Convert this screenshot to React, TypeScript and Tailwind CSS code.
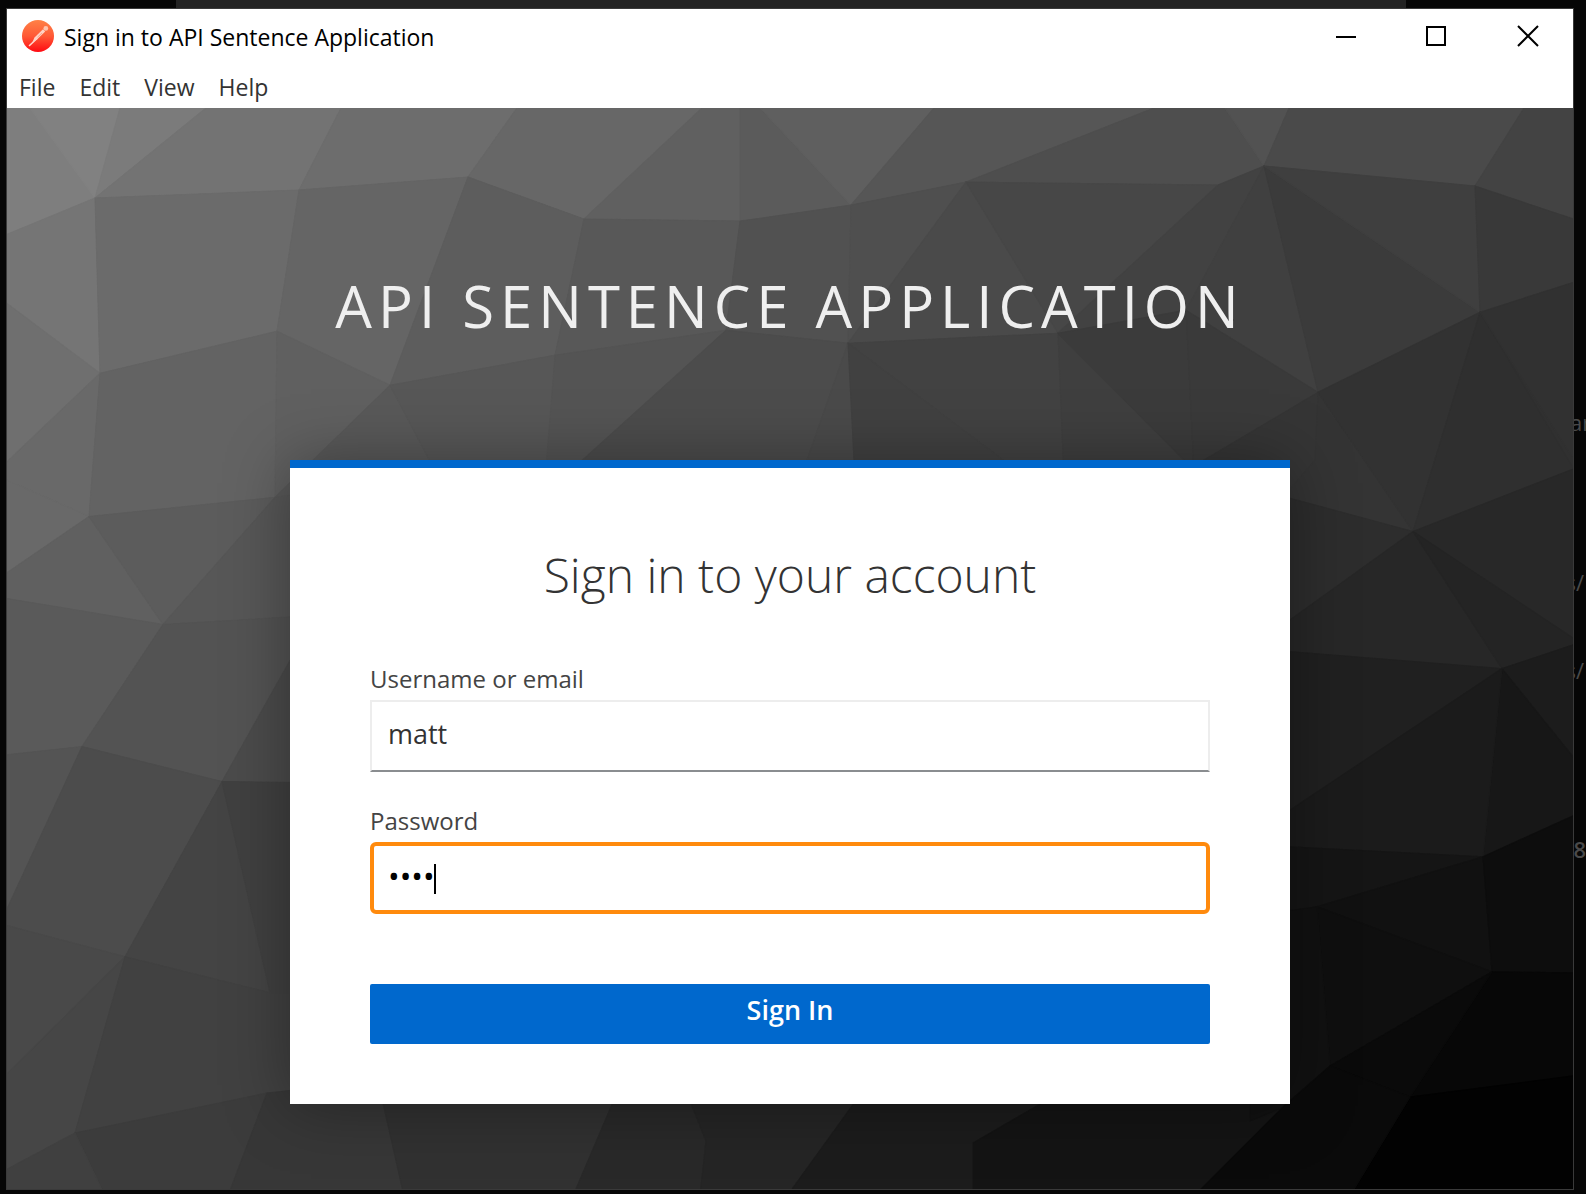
import React from "react";

/** Facets of the low-poly backdrop: grey level followed by the corner points. */
const facets: [number, string][] = [
  [0x7e, "0,100 120,108 95,198 6,235 0,235"],
  [0x81, "30,108 120,108 95,198"],
  [0x7b, "120,108 206,108 95,198"],
  [0x73, "206,108 341,108 299,190 95,198"],
  [0x6d, "341,108 517,108 468,177 299,190"],
  [0x67, "517,108 702,108 584,219 468,177"],
  [0x60, "702,108 740,108 740,221 584,219"],
  [0x5b, "740,108 760,108 851,205 740,221"],
  [0x5f, "760,108 934,108 851,205"],
  [0x56, "934,108 1154,108 966,182 851,205"],
  [0x4e, "1154,108 1225,108 1264,166 1218,185 966,182"],
  [0x52, "1225,108 1289,108 1264,166"],
  [0x4a, "1289,108 1524,108 1475,186 1264,166"],
  [0x43, "1524,108 1580,108 1580,221 1475,186"],
  [0x75, "0,237 95,198 100,373 0,298"],
  [0x6f, "0,298 100,373 0,468"],
  [0x6b, "95,198 299,190 277,331 100,373"],
  [0x65, "299,190 468,177 390,385 277,331"],
  [0x5d, "468,177 584,219 555,355 390,385"],
  [0x58, "584,219 740,221 726,330 555,355"],
  [0x51, "740,221 851,205 848,343 726,330"],
  [0x4f, "851,205 966,182 848,343"],
  [0x4a, "966,182 1058,333 848,343"],
  [0x47, "966,182 1218,185 1058,333"],
  [0x42, "1218,185 1264,166 1186,310 1058,333"],
  [0x40, "1264,166 1318,392 1186,310"],
  [0x3b, "1264,166 1480,312 1318,392"],
  [0x3f, "1264,166 1475,186 1480,312"],
  [0x39, "1475,186 1580,221 1580,280 1480,312"],
  [0x69, "0,468 100,373 89,516 0,477"],
  [0x63, "100,373 277,331 275,497 89,516"],
  [0x60, "277,331 390,385 275,497"],
  [0x59, "390,385 440,480 275,497"],
  [0x57, "390,385 555,355 550,480 440,480"],
  [0x54, "555,355 726,330 565,480 545,480"],
  [0x4c, "726,330 848,343 800,480 560,480"],
  [0x4a, "848,343 855,480 800,480"],
  [0x42, "848,343 1058,333 1064,480 1030,480"],
  [0x41, "848,343 1030,480 855,480"],
  [0x3f, "1058,333 1200,470 1200,490 1064,480"],
  [0x3b, "1058,333 1186,310 1194,470"],
  [0x3a, "1186,310 1318,392 1194,470"],
  [0x35, "1318,392 1317,500 1190,490 1190,468"],
  [0x34, "1318,392 1413,531 1280,500 1315,460"],
  [0x32, "1318,392 1480,312 1413,531"],
  [0x2f, "1480,312 1574,469 1413,531"],
  [0x31, "1480,312 1580,280 1580,469"],
  [0x69, "0,477 89,516 0,577"],
  [0x60, "89,516 163,624 0,597 0,577"],
  [0x5c, "89,516 275,497 163,624"],
  [0x57, "275,497 400,480 400,610 163,624"],
  [0x5a, "163,624 82,746 0,755 0,597"],
  [0x53, "163,624 400,610 290,660 222,781 82,746"],
  [0x4b, "222,781 290,660 400,660 400,783"],
  [0x54, "82,746 0,935 0,755"],
  [0x4c, "82,746 222,781 125,956 0,923"],
  [0x49, "0,923 125,956 0,1080"],
  [0x46, "125,956 75,1132 0,1172 0,1080"],
  [0x44, "222,781 270,992 125,956"],
  [0x40, "222,781 400,783 400,992 270,992"],
  [0x41, "125,956 270,992 400,992 400,1080 75,1132"],
  [0x3c, "75,1132 267,1092 228,1195 105,1195"],
  [0x40, "0,1172 75,1132 105,1195 0,1195"],
  [0x37, "267,1092 378,1080 404,1195 228,1195"],
  [0x31, "378,1080 622,1080 573,1195 404,1195"],
  [0x29, "622,1080 682,1080 706,1140 700,1195 573,1195"],
  [0x25, "682,1080 870,1080 787,1195 700,1195 706,1140"],
  [0x1c, "870,1080 1080,1080 973,1142 973,1195 787,1195"],
  [0x14, "1080,1080 1310,1080 1194,1195 973,1195 973,1142"],
  [0x2d, "1250,487 1413,531 1250,650"],
  [0x27, "1413,531 1502,668 1250,648"],
  [0x28, "1413,531 1580,466 1580,645"],
  [0x24, "1413,531 1580,642 1502,668"],
  [0x1c, "1502,668 1580,642 1580,765"],
  [0x17, "1502,668 1580,765 1580,812 1483,856"],
  [0x20, "1250,648 1502,668 1250,840"],
  [0x1b, "1250,836 1502,668 1483,856 1250,844"],
  [0x15, "1250,844 1483,856 1317,906 1250,920"],
  [0x11, "1317,906 1483,856 1492,971"],
  [0x0d, "1483,856 1580,812 1580,972 1492,971"],
  [0x0f, "1317,906 1492,971 1330,1065"],
  [0x11, "1250,915 1317,906 1330,1065 1282,1107 1250,1120"],
  [0x07, "1492,971 1580,972 1580,1075 1410,1096"],
  [0x0a, "1492,971 1410,1096 1330,1065"],
  [0x02, "1410,1096 1580,1074 1580,1195 1350,1195"],
  [0x0a, "1330,1065 1410,1096 1350,1195 1194,1195 1282,1107"],
];

function Backdrop() {
  return (
    <svg
      className="absolute inset-0 h-full w-full"
      viewBox="7 108 1566 1080"
      preserveAspectRatio="none"
      aria-hidden="true"
    >
      <rect x="0" y="100" width="1600" height="1100" fill="#303030" />
      {facets.map(([level, points]) => {
        const fill = `rgb(${level},${level},${level})`;
        return <polygon key={points} points={points} fill={fill} stroke={fill} strokeWidth="1" />;
      })}
    </svg>
  );
}

function AppLogo() {
  return (
    <svg width="32" height="32" viewBox="0 0 32 32" aria-hidden="true">
      <defs>
        <linearGradient id="logo-fill" x1="0" y1="0" x2="0" y2="1">
          <stop offset="0" stopColor="#ff8146" />
          <stop offset="0.5" stopColor="#ff5a36" />
          <stop offset="1" stopColor="#ff0a12" />
        </linearGradient>
      </defs>
      <circle cx="16" cy="16" r="16" fill="url(#logo-fill)" />
      <path d="M7.5 25.5 L15 18.5" stroke="#ffd9cf" strokeWidth="1.6" strokeLinecap="round" />
      <path d="M12.5 17.5 L21 9.3 L23.2 11.5 L15 19.6 L10.5 22 Z" fill="#ffd2c4" />
      <path d="M15.5 17.3 L20 13" stroke="#ff8a68" strokeWidth="0.6" />
      <circle cx="23.8" cy="8.4" r="2.4" fill="#ffc4ae" />
    </svg>
  );
}

const menus = ["File", "Edit", "View", "Help"];

function TitleBar() {
  return (
    <header className="bg-white text-black">
      <div className="flex h-14 items-center">
        <div className="flex flex-1 items-center gap-2.5 pb-0.5 pl-[15px]">
          <AppLogo />
          <span className="pt-0.5 text-[23px] leading-8">Sign in to API Sentence Application</span>
        </div>
        <div className="flex pb-0.5">
          <button type="button" aria-label="Minimize" className="flex h-13 w-[91px] items-center justify-center">
            <svg width="22" height="22" viewBox="0 0 22 22" fill="none" stroke="black" strokeWidth="2">
              <path d="M1 12H21" />
            </svg>
          </button>
          <button type="button" aria-label="Maximize" className="flex h-13 w-[91px] items-center justify-center">
            <svg width="22" height="22" viewBox="0 0 22 22" fill="none" stroke="black" strokeWidth="2">
              <rect x="1" y="2" width="18" height="18" />
            </svg>
          </button>
          <button type="button" aria-label="Close" className="flex h-13 w-[91px] items-center justify-center">
            <svg width="22" height="22" viewBox="0 0 22 22" fill="none" stroke="black" strokeWidth="2">
              <path d="M1 1L21 21M21 1L1 21" />
            </svg>
          </button>
        </div>
      </div>
      <nav className="flex h-[43px] items-center gap-6 pl-3">
        {menus.map((menu) => (
          <button key={menu} type="button" className="text-[23px] leading-8 text-[#333]">
            {menu}
          </button>
        ))}
      </nav>
    </header>
  );
}

function SignInForm() {
  return (
    <form
      onSubmit={(event) => event.preventDefault()}
      className="flex w-full max-w-[1000px] flex-col border-t-8 border-[#0068cd] bg-white px-20 pt-[75px] pb-[60px] shadow-[0_2px_60px_rgba(0,0,0,0.35)]"
    >
      <h2 className="mb-[54px] text-center text-[48px] leading-[64px] font-light text-[#333]">
        Sign in to your account
      </h2>
      <label htmlFor="username" className="mb-[3px] text-[24px] leading-9 text-[#444]">
        Username or email
      </label>
      <input
        id="username"
        type="text"
        defaultValue="matt"
        className="h-[72px] border-2 border-[#ededed] border-b-[#8a8d90] bg-white px-4 pb-1.5 text-[27px] text-[#333] outline-none"
      />
      <label htmlFor="password" className="mt-[31px] mb-[3px] text-[24px] leading-9 text-[#444]">
        Password
      </label>
      <div className="relative flex">
        <input
          id="password"
          type="password"
          defaultValue="matt"
          className="h-[72px] flex-1 rounded-md border-4 border-[#ff8a0d] bg-white px-3.5 pb-1 text-[31px] text-black caret-transparent outline-none"
        />
        <span className="absolute top-[22px] left-16 h-[30px] w-0.5 bg-black" aria-hidden="true" />
      </div>
      <button
        type="submit"
        className="mt-[70px] h-[60px] rounded-xs bg-[#0068cd] pb-2 text-[27px] font-semibold text-white"
      >
        Sign In
      </button>
    </form>
  );
}

export default function App() {
  return (
    <div className="relative flex min-h-screen flex-col overflow-hidden bg-[#060606] pt-2 pr-3 pb-1 pl-1.5 font-['Open_Sans',sans-serif]">
      <div className="absolute top-0 right-[180px] left-44 h-2 bg-[#232323]" />
      <div className="absolute top-0 right-0 bottom-0 w-6 overflow-hidden text-[22px] leading-7 text-[#4a4a4a]" aria-hidden="true">
        <span className="absolute top-[408px] left-2">ar</span>
        <span className="absolute top-[568px] right-0.5">s/</span>
        <span className="absolute top-[656px] right-0.5">s/</span>
        <span className="absolute top-[835px] right-0 font-semibold">28</span>
      </div>
      <div className="relative flex flex-1 flex-col border border-[#3a3a3a]">
        <TitleBar />
        <main className="relative flex flex-1 flex-col items-center overflow-hidden">
          <Backdrop />
          <div className="relative flex w-full flex-1 flex-col items-center px-10 pt-[158px] pb-20">
            <h1 className="mb-[114px] text-center text-[58px] leading-[80px] font-medium tracking-[6px] text-[#efefef] uppercase">
              API Sentence Application
            </h1>
            <SignInForm />
          </div>
        </main>
      </div>
    </div>
  );
}
